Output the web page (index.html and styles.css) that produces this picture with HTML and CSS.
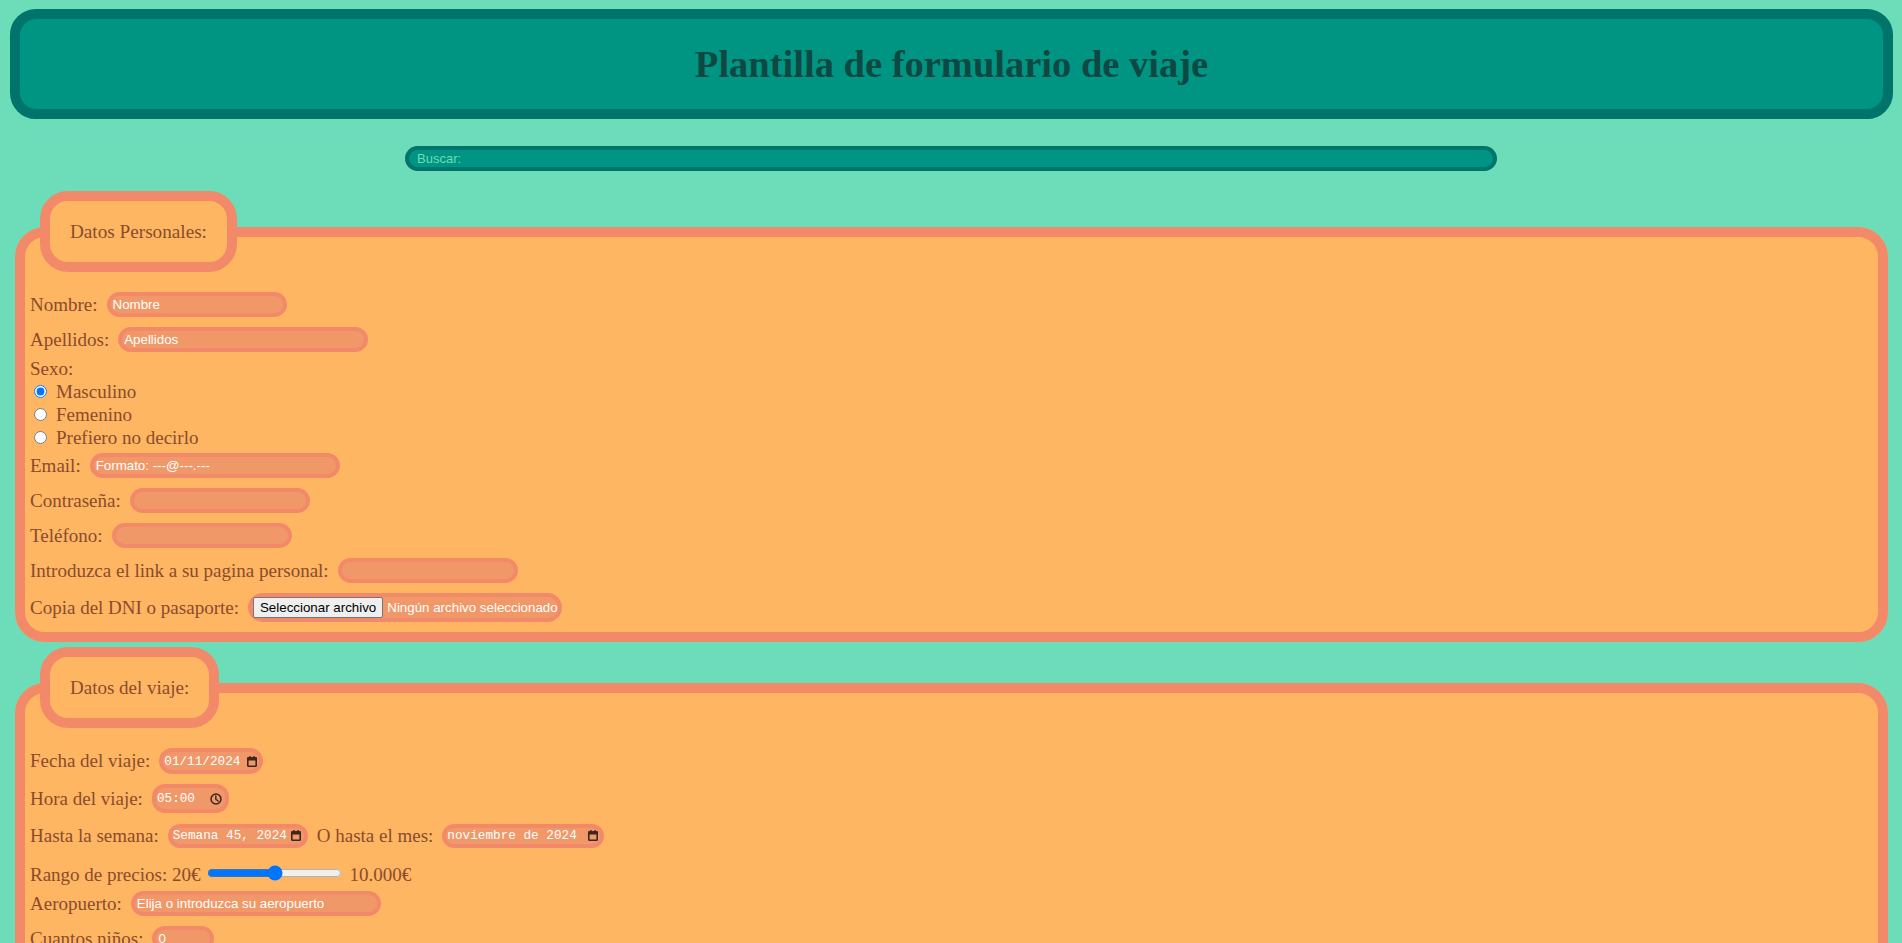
FILE: index.html
```html
<!DOCTYPE html>
<html lang="es">
<head>
<meta charset="utf-8">
<title>Plantilla de formulario de viaje</title>
<link rel="stylesheet" href="styles.css">
</head>
<body>
<header class="header">
  <h1 class="title">Plantilla de formulario de viaje</h1>
</header>
<div class="search-wrap">
  <input class="search" type="search" placeholder="Buscar:">
</div>
<form class="form">
  <fieldset class="group">
    <legend class="legend">Datos Personales:</legend>
    <div class="row first">
      <label class="lbl" for="nombre">Nombre:</label>
      <input class="field" id="nombre" type="text" placeholder="Nombre">
    </div>
    <div class="row">
      <label class="lbl" for="apellidos">Apellidos:</label>
      <input class="field wide" id="apellidos" type="text" placeholder="Apellidos">
    </div>
    <div class="sexo">
      <div class="lbl line">Sexo:</div>
      <label class="radio-row lbl"><input class="radio" type="radio" name="sexo" checked>Masculino</label>
      <label class="radio-row lbl"><input class="radio" type="radio" name="sexo">Femenino</label>
      <label class="radio-row lbl"><input class="radio" type="radio" name="sexo">Prefiero no decirlo</label>
    </div>
    <div class="row tight">
      <label class="lbl" for="email">Email:</label>
      <input class="field wide" id="email" type="email" placeholder="Formato: ---@---.---">
    </div>
    <div class="row">
      <label class="lbl" for="pass">Contraseña:</label>
      <input class="field" id="pass" type="password">
    </div>
    <div class="row">
      <label class="lbl" for="tel">Teléfono:</label>
      <input class="field" id="tel" type="tel">
    </div>
    <div class="row">
      <label class="lbl" for="web">Introduzca el link a su pagina personal:</label>
      <input class="field" id="web" type="url">
    </div>
    <div class="row last">
      <span class="lbl">Copia del DNI o pasaporte:</span>
      <div class="file">
        <button class="file-btn" type="button">Seleccionar archivo</button>
        <span class="file-name">Ningún archivo seleccionado</span>
      </div>
    </div>
  </fieldset>

  <fieldset class="group second">
    <legend class="legend">Datos del viaje:</legend>
    <div class="row first">
      <span class="lbl">Fecha del viaje:</span>
      <div class="picker w-date">
        <span class="picker-text">01/11/2024</span>
        <svg class="cal" width="10" height="11" viewBox="0 0 10 11"><rect x="0.8" y="2" width="8.4" height="8.2" rx="0.8" fill="none" stroke="#3b2620" stroke-width="1.6"/><rect x="0" y="1.2" width="10" height="3.3" rx="0.6" fill="#3b2620"/><rect x="2.2" y="0" width="1.4" height="2" fill="#3b2620"/><rect x="6.4" y="0" width="1.4" height="2" fill="#3b2620"/></svg>
      </div>
    </div>
    <div class="row">
      <span class="lbl">Hora del viaje:</span>
      <div class="picker w-time">
        <span class="picker-text">05:00</span>
        <svg class="clock" width="12" height="12" viewBox="0 0 12 12"><circle cx="6" cy="6" r="5" fill="none" stroke="#3b2620" stroke-width="1.5"/><path d="M5.8 3V6.2L8.1 8" fill="none" stroke="#3b2620" stroke-width="1.4" stroke-linecap="round"/></svg>
      </div>
    </div>
    <div class="row">
      <span class="lbl">Hasta la semana:</span>
      <div class="picker w-week">
        <span class="picker-text">Semana 45, 2024</span>
        <svg class="cal" width="10" height="11" viewBox="0 0 10 11"><rect x="0.8" y="2" width="8.4" height="8.2" rx="0.8" fill="none" stroke="#3b2620" stroke-width="1.6"/><rect x="0" y="1.2" width="10" height="3.3" rx="0.6" fill="#3b2620"/><rect x="2.2" y="0" width="1.4" height="2" fill="#3b2620"/><rect x="6.4" y="0" width="1.4" height="2" fill="#3b2620"/></svg>
      </div>
      <span class="lbl">O hasta el mes:</span>
      <div class="picker w-month">
        <span class="picker-text">noviembre de 2024</span>
        <svg class="cal" width="10" height="11" viewBox="0 0 10 11"><rect x="0.8" y="2" width="8.4" height="8.2" rx="0.8" fill="none" stroke="#3b2620" stroke-width="1.6"/><rect x="0" y="1.2" width="10" height="3.3" rx="0.6" fill="#3b2620"/><rect x="2.2" y="0" width="1.4" height="2" fill="#3b2620"/><rect x="6.4" y="0" width="1.4" height="2" fill="#3b2620"/></svg>
      </div>
    </div>
    <div class="range-row lbl">
      Rango de precios: 20€<input class="range" type="range" min="20" max="10000" value="5010">10.000€
    </div>
    <div class="row airport">
      <label class="lbl" for="aero">Aeropuerto:</label>
      <input class="field wide" id="aero" type="text" list="aeropuertos" placeholder="Elija o introduzca su aeropuerto">
      <datalist id="aeropuertos">
        <option value="Madrid-Barajas"></option>
        <option value="Barcelona-El Prat"></option>
      </datalist>
    </div>
    <div class="row">
      <label class="lbl" for="ninos">Cuantos niños:</label>
      <input class="field w-num" id="ninos" type="number" value="0" min="0">
    </div>
    <div class="row">
      <label class="lbl" for="adultos">Cuantos adultos:</label>
      <input class="field w-num" id="adultos" type="number" value="1" min="1">
    </div>
  </fieldset>
</form>
</body>
</html>
```

FILE: styles.css
```css
body {
  margin: 8px;
  background: #6ddcb9;
  font-family: "Liberation Serif", "DejaVu Serif", serif;
}

.header {
  margin: 1px 1px 0 2px;
  height: 90px;
  border: 10px solid #00736a;
  border-radius: 26px;
  background: #009482;
  display: flex;
  align-items: center;
  justify-content: center;
}

.title {
  margin: 0;
  font-size: 38.5px;
  font-weight: bold;
  color: #0d4843;
  font-family: "Liberation Serif", serif;
}

.search-wrap {
  display: flex;
  justify-content: center;
  margin-top: 27px;
}

.search {
  box-sizing: border-box;
  width: 1092px;
  height: 25px;
  border: 4px solid #00736a;
  border-radius: 13px;
  background: #009482;
  padding: 0 8px;
  font-family: "Liberation Sans", sans-serif;
  font-size: 13px;
  color: #6ddcb9;
  outline: none;
}

.search::placeholder {
  color: #6ddcb9;
}

.form {
  margin: 0;
}

.group {
  margin: 20px 6px 0 7px;
  border: 10px solid #f28a6a;
  border-radius: 30px;
  background: #ffb662;
  padding: 0 5px 10px 5px;
  min-width: 0;
}

.group.second {
  margin-top: 5px;
  padding-bottom: 30px;
}

.legend {
  margin-left: 10px;
  padding: 20px 20px;
  border: 10px solid #f28a6a;
  border-radius: 28px;
  background: #ffb662;
  font-family: "Liberation Serif", serif;
  font-size: 19.2px;
  line-height: 21px;
  color: #8a4b2d;
}

.second .legend {
  font-size: 19px;
}

.lbl {
  font-family: "Liberation Serif", serif;
  font-size: 19px;
  color: #8a4b2d;
}

.row {
  display: flex;
  align-items: center;
  gap: 9px;
  margin-top: 10px;
  min-height: 25px;
}

.row.first {
  margin-top: 20px;
}

.row.tight {
  margin-top: 4px;
}

.row.airport {
  margin-top: 5px;
}

.sexo {
  margin-top: 6px;
}

.line {
  line-height: 22px;
}

.radio-row {
  display: flex;
  align-items: center;
  height: 23px;
}

.radio {
  margin: 0 9px 0 4px;
  width: 13px;
  height: 13px;
}

.field {
  box-sizing: border-box;
  width: 180px;
  height: 25px;
  border: 4px solid #f28a6a;
  border-radius: 13px;
  background: #f09868;
  padding: 1px 2px;
  font-family: "Liberation Sans", sans-serif;
  font-size: 13.33px;
  color: #ffffff;
  outline: none;
}

.field::placeholder {
  color: #ffffff;
}

.field.wide {
  width: 250px;
}

.w-num { width: 62px; }

.picker {
  box-sizing: border-box;
  display: flex;
  align-items: center;
  justify-content: space-between;
  height: 26px;
  border: 4px solid #f28a6a;
  border-radius: 13px;
  background: #f09868;
  padding: 0 2px 0 1px;
}

.picker-text {
  font-family: "Liberation Mono", "DejaVu Sans Mono", monospace;
  font-size: 12.7px;
  color: #ffffff;
  white-space: pre;
}

.w-date { width: 104px; }
.w-time { width: 77px; height: 29px; padding-right: 3px; }
.w-week { width: 140px; height: 24px; padding-right: 3px; }
.w-month { width: 162px; height: 24px; padding-right: 2px; }

.cal, .clock {
  flex: none;
}

.file {
  display: flex;
  align-items: center;
  gap: 4px;
  height: 21px;
  border: 4px solid #f28a6a;
  border-radius: 15px;
  background: #f09868;
  padding: 0 0 0 1px;
}

.file-btn {
  height: 21px;
  margin: 0;
  padding: 0 6px;
  border: 1px solid #767676;
  border-radius: 2px;
  background: #efefef;
  font-family: "Liberation Sans", sans-serif;
  font-size: 13.33px;
  color: #000000;
}

.file-name {
  font-family: "Liberation Sans", sans-serif;
  font-size: 13.33px;
  color: #ffffff;
}

.range-row {
  margin-top: 16px;
  line-height: 22px;
}

.range {
  width: 135px;
  margin: 0 7px;
  vertical-align: baseline;
}
```
